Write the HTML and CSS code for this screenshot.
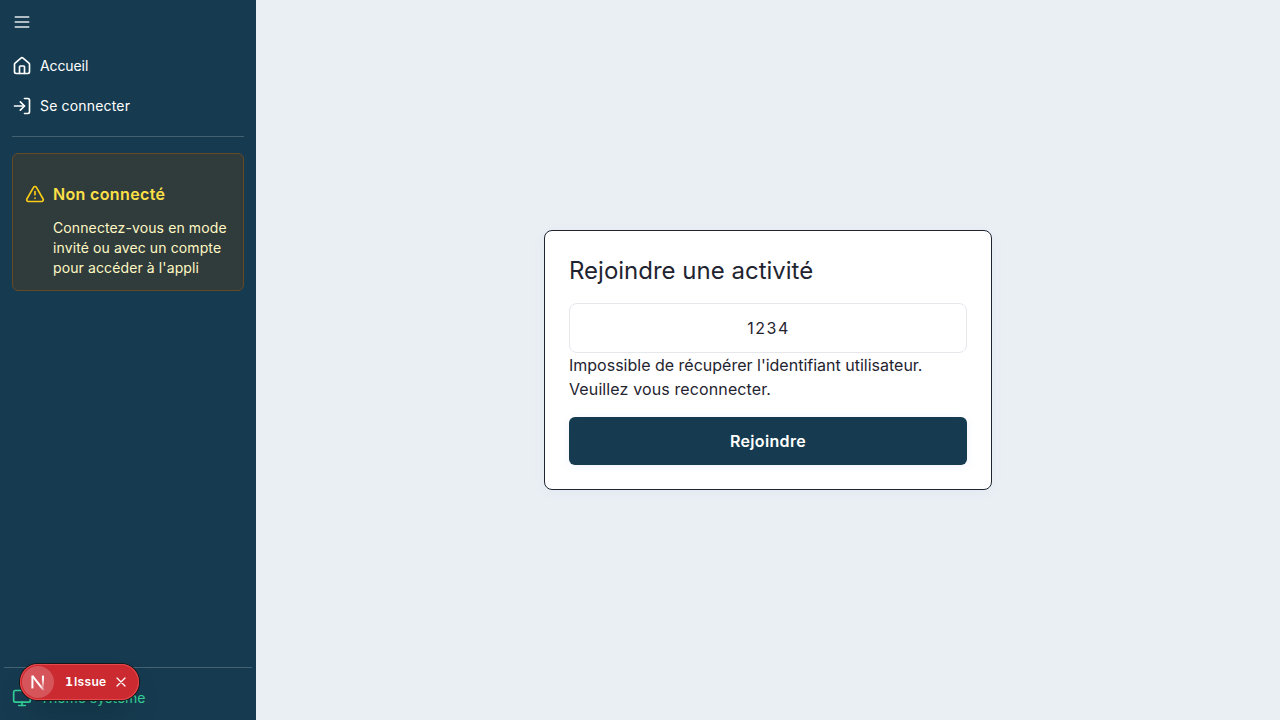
FILE: index.html
```html
<!DOCTYPE html>
<html lang="fr">
<head>
<meta charset="utf-8">
<title>Rejoindre une activité</title>
<link rel="stylesheet" href="styles.css">
</head>
<body>
<div class="app">
  <aside class="sidebar">
    <div class="side-top">
      <button class="menu" aria-label="Menu">
        <svg class="icon" viewBox="0 0 24 24"><path d="M4 6h16M4 12h16M4 18h16"/></svg>
      </button>
      <nav class="nav">
        <a class="nav-item"><svg class="icon" viewBox="0 0 24 24"><path d="M15 21v-8a1 1 0 0 0-1-1h-4a1 1 0 0 0-1 1v8"/><path d="M3 10a2 2 0 0 1 .709-1.528l7-5.999a2 2 0 0 1 2.582 0l7 5.999A2 2 0 0 1 21 10v9a2 2 0 0 1-2 2H5a2 2 0 0 1-2-2z"/></svg><span class="nav-home">Accueil</span></a>
        <a class="nav-item"><svg class="icon" viewBox="0 0 24 24"><path d="M15 3h4a2 2 0 0 1 2 2v14a2 2 0 0 1-2 2h-4"/><path d="m10 17 5-5-5-5"/><path d="M15 12H3"/></svg><span class="nav-login">Se connecter</span></a>
      </nav>
      <hr class="rule">
      <section class="alert">
        <svg class="icon alert-icon" viewBox="0 0 24 24"><path d="m21.73 18-8-14a2 2 0 0 0-3.48 0l-8 14A2 2 0 0 0 4 21h16a2 2 0 0 0 1.73-3"/><path d="M12 9v4"/><path d="M12 17h.01"/></svg>
        <div>
          <h2 class="alert-title">Non connecté</h2>
          <p class="alert-text">Connectez-vous en mode invité ou avec un compte pour accéder à l'appli</p>
        </div>
      </section>
    </div>
    <footer class="side-bottom">
      <a class="theme"><svg class="icon" viewBox="0 0 24 24"><rect x="2" y="3" width="20" height="14" rx="2"/><path d="M8 21h8M12 17v4"/></svg><span>Thème système</span></a>
    </footer>
  </aside>
  <main class="main">
    <section class="card">
      <h1 class="card-title">Rejoindre une activité</h1>
      <div class="code">1234</div>
      <p class="message">Impossible de récupérer l'identifiant utilisateur. <span class="message-end">Veuillez vous reconnecter.</span></p>
      <button class="join">Rejoindre</button>
    </section>
  </main>
</div>
<div class="issue">
  <span class="issue-logo">
    <svg class="n-mark" viewBox="0 0 40 40" fill="none">
      <defs>
        <linearGradient id="diag" x1="24" y1="24" x2="29" y2="32" gradientUnits="userSpaceOnUse"><stop stop-color="#fff"/><stop offset="1" stop-color="#fff" stop-opacity="0"/></linearGradient>
        <linearGradient id="stem" x1="26" y1="16" x2="26" y2="29" gradientUnits="userSpaceOnUse"><stop stop-color="#fff"/><stop offset="1" stop-color="#fff" stop-opacity="0"/></linearGradient>
      </defs>
      <path d="M13 12.4 27 30.2" stroke="url(#diag)" stroke-width="2.5"/>
      <path d="M13 28V12" stroke="#fff" stroke-width="2.5"/>
      <path d="M26.2 12v16" stroke="url(#stem)" stroke-width="2.5"/>
    </svg>
  </span>
  <span class="issue-label"><span class="issue-count">1</span><span>Issue</span></span>
  <svg class="issue-close" viewBox="0 0 10 10"><path d="m1 1 8 8M9 1 1 9"/></svg>
</div>
</body>
</html>
```
FILE: styles.css
```css
* { box-sizing: border-box; }
body { margin: 0; font-family: Inter, sans-serif; color: #1f2430; background: #e9eff4; }
h1, h2, p { margin: 0; font-weight: 400; }
button { border: 0; padding: 0; background: none; font: inherit; color: inherit; }
.app { display: flex; height: 720px; background: #e9eff3; }
.icon { display: block; flex: none; width: 20px; height: 20px; fill: none; stroke: currentColor; stroke-width: 2; stroke-linecap: round; stroke-linejoin: round; }

.sidebar { display: flex; flex-direction: column; justify-content: space-between; width: 256px; background: #163b50; color: #fff; font-size: 14px; line-height: 20px; }
.side-top { padding: 12px 12px 0; }
.menu { display: block; color: #e4e9eb; }
.nav { display: flex; flex-direction: column; gap: 4px; margin-top: 16px; }
.nav-item, .theme { display: flex; align-items: center; gap: 8px; height: 36px; }
.nav-home { letter-spacing: -.1px; }
.nav-login { letter-spacing: .17px; }
.rule { height: 1px; margin: 12px 0 16px; border: 0; background: #456272; }
.alert { display: flex; align-items: flex-start; gap: 8px; height: 138px; padding: 30px 12px 12px; border: 1px solid #664a24; border-radius: 6px; background: #303b3c; }
.alert-icon { color: #facc15; }
.alert-title { margin-bottom: 14px; color: #fde047; font-size: 16px; font-weight: 600; line-height: 20px; letter-spacing: .35px; }
.alert-text { color: #fef9c3; letter-spacing: .11px; }
.side-bottom { height: 53px; margin: 0 4px; padding: 12px 8px 4px; border-top: 1px solid #456272; }
.theme { color: #34d399; }

.main { display: flex; flex: 1; align-items: center; justify-content: center; }
.card { width: 448px; height: 260px; padding: 24px; border: 1px solid #1f2430; border-radius: 8px; background: #fff; box-shadow: 0 2px 10px rgba(190, 205, 250, .16); }
.card-title { font-size: 24px; line-height: 32px; }
.code { display: flex; align-items: center; justify-content: center; height: 50px; margin-top: 16px; padding-left: 1px; border: 1px solid #e5e7eb; border-radius: 8px; font-size: 16px; letter-spacing: 1.5px; }
.message { font-size: 16px; line-height: 24px; }
.message-end { letter-spacing: .12px; }
.join { display: block; width: 100%; height: 48px; margin-top: 16px; border-radius: 6px; background: #163b50; color: #fff; font-size: 16px; font-weight: 600; letter-spacing: .35px; box-shadow: 0 2px 8px rgba(170, 190, 245, .18); }

.issue { position: absolute; left: 20px; top: 664px; display: flex; align-items: center; width: 119px; height: 36px; padding: 2px; border-radius: 18px; background: #ca2a30; color: #fff; box-shadow: 0 0 0 1px #171717, inset 0 0 0 1px #e5484d, 0 16px 32px -8px rgba(0, 0, 0, .24); }
.issue-logo { display: flex; align-items: center; justify-content: center; width: 32px; height: 32px; border-radius: 50%; background: #d6555a; }
.n-mark { width: 32px; height: 32px; }
.issue-label { display: flex; align-items: baseline; gap: 2px; width: 42px; margin-left: 11px; font-size: 12px; font-weight: 600; line-height: 16px; letter-spacing: .3px; }
.issue-count { width: 7px; font-family: "DejaVu Sans", sans-serif; font-size: 11.5px; }
.issue-close { width: 10px; height: 10px; margin-left: 9px; overflow: visible; fill: none; stroke: #fff; stroke-width: 1.3; stroke-linecap: round; }
```
